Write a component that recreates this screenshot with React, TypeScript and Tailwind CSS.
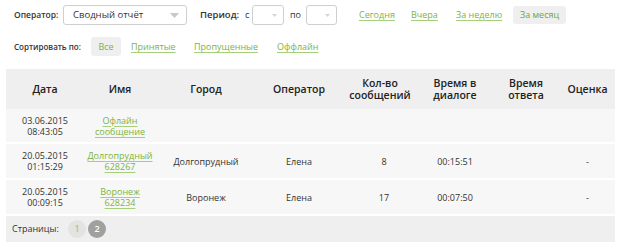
import React from 'react'

const font = { fontFamily: '"Open Sans", "Liberation Sans", sans-serif' }

const Caret = () => (
  <svg width="9" height="5" viewBox="0 0 9 5" className="shrink-0">
    <path d="M0 0 L9 0 L4.5 5 Z" fill="#c8c8c8" />
  </svg>
)

const SmallCaret = () => (
  <svg width="5" height="3" viewBox="0 0 5 3" className="shrink-0">
    <path d="M0 0 L5 0 L2.5 3 Z" fill="#d4d4d4" />
  </svg>
)

const Link = ({ children }: { children: React.ReactNode }) => (
  <span className="text-[#7cb342] underline decoration-[#a5cf7a] underline-offset-2">{children}</span>
)

const rows = [
  { date: '03.06.2015', time: '08:43:05', name: ['Офлайн', 'сообщение'], city: '', op: '', count: '', dlg: '', resp: '', mark: '' },
  { date: '20.05.2015', time: '01:15:29', name: ['Долгопрудный', '628267'], city: 'Долгопрудный', op: 'Елена', count: '8', dlg: '00:15:51', resp: '', mark: '-' },
  { date: '20.05.2015', time: '00:09:15', name: ['Воронеж', '628234'], city: 'Воронеж', op: 'Елена', count: '17', dlg: '00:07:50', resp: '', mark: '-' },
]

export default function App() {
  return (
    <div className="w-[624px] h-[242px] bg-white text-[#333] text-[9px] overflow-hidden" style={font}>
      <div className="flex items-center h-[30px] pl-[14px]">
        <span className="w-[49px] font-semibold text-[8.5px]">Оператор:</span>
        <div className="w-[124px] h-[20px] border border-[#cfcfcf] rounded-[3px] flex items-center justify-between pl-[9px] pr-[7px] text-[9.5px]">
          <span>Сводный отчёт</span>
          <Caret />
        </div>
        <span className="ml-[13px] w-[45px] font-semibold text-[9.5px]">Период:</span>
        <span className="w-[7px]">с</span>
        <div className="w-[32px] h-[20px] border border-[#cfcfcf] rounded-[3px] flex items-center justify-end pr-[6px]">
          <SmallCaret />
        </div>
        <span className="ml-[6px] w-[16px]">по</span>
        <div className="w-[31px] h-[20px] border border-[#cfcfcf] rounded-[3px] flex items-center justify-end pr-[6px]">
          <SmallCaret />
        </div>
        <span className="ml-[22px] w-[52px]"><Link>Сегодня</Link></span>
        <span className="w-[45px]"><Link>Вчера</Link></span>
        <span className="w-[57px]"><Link>За неделю</Link></span>
        <span className="w-[53px] h-[18px] rounded-[3px] bg-[#efefef] text-[#6ea83a] flex items-center justify-center">За месяц</span>
      </div>
      <div className="flex items-center h-[31px] pl-[14px] mt-[1px]">
        <span className="w-[77px] font-semibold text-[8px]">Сортировать по:</span>
        <span className="w-[30px] h-[19px] rounded-[3px] bg-[#efefef] text-[#7cb342] flex items-center justify-center">Все</span>
        <span className="ml-[10px] w-[63px]"><Link>Принятые</Link></span>
        <span className="w-[83px]"><Link>Пропущенные</Link></span>
        <span><Link>Оффлайн</Link></span>
      </div>
      <div className="ml-[6px] mt-[7px] w-[609px]">
        <table className="w-full border-collapse table-fixed">
          <colgroup>
            <col className="w-[78px]" />
            <col className="w-[72px]" />
            <col className="w-[100px]" />
            <col className="w-[86px]" />
            <col className="w-[76px]" />
            <col className="w-[74px]" />
            <col className="w-[68px]" />
            <col className="w-[55px]" />
          </colgroup>
          <thead>
            <tr className="bg-[#efefef] h-[40px] text-[10.5px] text-[#222] leading-[12px]">
              <th className="font-semibold">Дата</th>
              <th className="font-semibold">Имя</th>
              <th className="font-semibold">Город</th>
              <th className="font-semibold">Оператор</th>
              <th className="font-semibold">Кол-во<br />сообщений</th>
              <th className="font-semibold">Время в<br />диалоге</th>
              <th className="font-semibold">Время<br />ответа</th>
              <th className="font-semibold">Оценка</th>
            </tr>
          </thead>
          <tbody className="leading-[11px]">
            {rows.map((r, i) => (
              <tr key={i} className={`bg-[#f7f7f7] border-b-2 border-white ${i === 0 ? 'h-[34px]' : 'h-[36px]'}`}>
                <td className="text-center align-middle">
                  <div>{r.date}</div>
                  <div>{r.time}</div>
                </td>
                <td className="text-center align-middle">
                  <div><Link>{r.name[0]}</Link></div>
                  <div><Link>{r.name[1]}</Link></div>
                </td>
                <td className="text-center">{r.city}</td>
                <td className="text-center">{r.op}</td>
                <td className="text-center pl-[8px]">{r.count}</td>
                <td className="text-center">{r.dlg}</td>
                <td className="text-center">{r.resp}</td>
                <td className="text-center">{r.mark}</td>
              </tr>
            ))}
          </tbody>
        </table>
        <div className="bg-[#efefef] h-[26px] flex items-center pl-[6px]">
          <span className="w-[56px]">Страницы:</span>
          <span className="w-[18px] h-[18px] rounded-full bg-[#e3e3e3] text-[#8bc34a] text-[9px] flex items-center justify-center">1</span>
          <span className="ml-[2px] w-[18px] h-[18px] rounded-full bg-[#a0a0a0] text-white text-[9px] font-semibold flex items-center justify-center">2</span>
        </div>
      </div>
    </div>
  )
}
